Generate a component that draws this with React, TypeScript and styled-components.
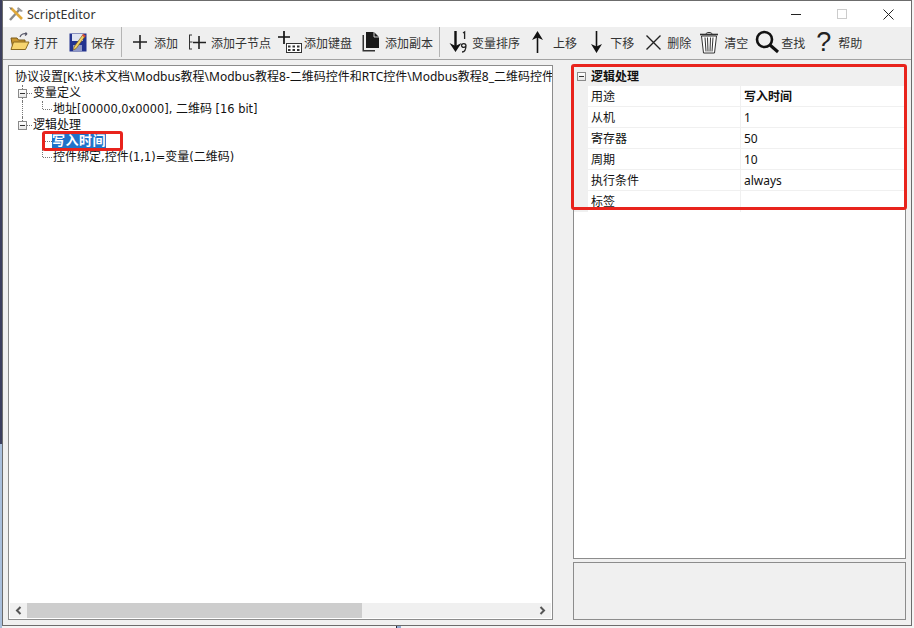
import React from "react";
import styled, { createGlobalStyle } from "styled-components";

const Global = createGlobalStyle`
  html, body { margin: 0; padding: 0; overflow: hidden; }
  body {
    width: 914px; height: 628px;
    background: linear-gradient(to bottom, #3c3f5e 0, #3c3f5e 444px, #a9bfdc 444px, #a9bfdc 628px);
    font-family: "Noto Sans", "Noto Sans CJK SC", sans-serif;
    font-size: 12px;
  }
  #root { height: 100%; }
`;

const Desktop = styled.div`
  position: relative;
  width: 914px;
  height: 628px;
  padding-left: 2px;
  box-sizing: border-box;
  background: linear-gradient(to right, transparent 0, transparent 2px, #f4f4f4 2px);
`;

const DesktopWindowEdge = styled.div`
  position: absolute;
  left: 396px;
  top: 626px;
  width: 4px;
  height: 2px;
  background: #8fa9cf;
  border-left: 1px solid #223;
`;

const Window = styled.div`
  width: 910px;
  height: 626px;
  box-sizing: border-box;
  border: 1px solid #6c6c6c;
  background: #f0f0f0;
  display: flex;
  flex-direction: column;
`;

const TitleBar = styled.div`
  height: 26px;
  flex: none;
  background: #fff;
  display: flex;
  align-items: center;
  padding-left: 5px;
`;

const TitleIcon = styled.svg`
  width: 16px;
  height: 16px;
  flex: none;
`;

const TitleText = styled.span`
  margin-left: 3px;
  font-size: 12.5px;
  color: #333;
  flex: 1;
`;

const WinButton = styled.div`
  width: 46px;
  height: 26px;
  display: flex;
  align-items: center;
  justify-content: center;
`;

const Toolbar = styled.div`
  height: 30px;
  padding-bottom: 2px;
  flex: none;
  box-sizing: content-box;
  border-bottom: 1px solid #a3a3a3;
  display: flex;
  align-items: center;
  padding-left: 7px;
  background: #efefef;
`;

const Tool = styled.div<{ $ml: number; $gap: number }>`
  display: flex;
  align-items: center;
  margin-left: ${(p) => p.$ml}px;
  gap: ${(p) => p.$gap}px;
  color: #333;
  font-size: 12px;
  white-space: nowrap;
  font-family: "Noto Sans CJK SC", sans-serif;
`;

const ToolSeparator = styled.div`
  width: 1px;
  height: 30px;
  margin-left: 6px;
  background: #b4b4b4;
`;

const Body = styled.div`
  flex: 1;
  min-height: 0;
  display: grid;
  grid-template-columns: 545px 333px;
  column-gap: 20px;
  padding: 5px;
`;

const TreePanel = styled.div`
  position: relative;
  border: 1px solid #8c8c8c;
  background: #fff;
  display: flex;
  flex-direction: column;
  overflow: hidden;
  min-height: 0;
`;

const TreeList = styled.div`
  flex: 1;
  padding: 3px 0 0 4px;
  overflow: hidden;
`;

const TreeRow = styled.div`
  height: 16px;
  display: flex;
  align-items: center;
  white-space: pre;
  color: #111;
  font-size: 12px;
  line-height: 16px;
  font-family: "Noto Sans", "Noto Sans CJK SC", sans-serif;
`;

const RootLabel = styled.span`
  margin-left: 2px;
`;

const LatinRun = styled.span`
  font-family: "DejaVu Sans", sans-serif;
  font-size: 11.4px;
`;

const Guide = styled.span<{ $line?: "none" | "full" | "half"; $arm?: boolean }>`
  position: relative;
  width: 20px;
  height: 16px;
  flex: none;
  &::before {
    content: "";
    position: absolute;
    left: 9px;
    top: 0;
    height: ${(p) => (p.$line === "none" ? 0 : p.$line === "half" ? 8 : 16)}px;
    border-left: 1px dotted #777;
  }
  &::after {
    content: "";
    position: absolute;
    left: 10px;
    top: 8px;
    width: ${(p) => (p.$arm ? 9 : 0)}px;
    border-top: 1px dotted #777;
  }
`;

const Expander = styled.span`
  position: absolute;
  z-index: 1;
  left: 5px;
  top: 4px;
  width: 7px;
  height: 7px;
  border: 1px solid #8a8a8a;
  background: linear-gradient(#fff, #e6e6e6);
  display: flex;
  align-items: center;
  justify-content: center;
  &::before {
    content: "";
    width: 5px;
    height: 1px;
    background: #333;
  }
`;

const SelectedLabel = styled.span`
  display: block;
  height: 14px;
  background: #1f73c9;
  color: #fff;
  font-weight: 700;
  font-size: 13px;
  letter-spacing: 0.5px;
  line-height: 13px;
  margin-left: -1px;
`;

const RedMark = styled.div`
  position: absolute;
  left: 33px;
  top: 65px;
  width: 81px;
  height: 20px;
  box-sizing: border-box;
  border: 3px solid #e8231c;
  border-radius: 3px;
  pointer-events: none;
`;

const HScroll = styled.div`
  height: 15px;
  flex: none;
  margin: 0 1px 1px 1px;
  background: #f0f0f0;
  display: flex;
  align-items: center;
`;

const ScrollArrow = styled.div`
  width: 17px;
  height: 15px;
  flex: none;
  display: flex;
  align-items: center;
  justify-content: center;
`;

const ScrollTrack = styled.div`
  flex: 1;
  height: 15px;
`;

const ScrollThumb = styled.div`
  height: 15px;
  background: #cdcdcd;
`;

const SideColumn = styled.div`
  display: flex;
  flex-direction: column;
  gap: 3px;
  min-height: 0;
`;

const SideTop = styled.div`
  position: relative;
  flex: 1;
  display: flex;
  min-height: 0;
`;

const PropGrid = styled.div`
  flex: 1;
  border: 1px solid #8c8c8c;
  background: #fff;
  overflow: hidden;
  font-family: "Noto Sans", "Noto Sans CJK SC", sans-serif;
`;

const CategoryRow = styled.div`
  height: 20px;
  background: #f0f0f0;
  display: flex;
  align-items: center;
  position: relative;
  padding-left: 17px;
  font-weight: 700;
  font-size: 12px;
  color: #111;
`;

const CategoryExpander = styled(Expander)`
  left: 3px;
  top: 6px;
`;

const PropRow = styled.div<{ $clip?: boolean }>`
  display: grid;
  grid-template-columns: 14px 153px 1fr;
  height: 21px;
  box-sizing: border-box;
  border-bottom: ${(p) => (p.$clip ? "none" : "1px solid #f0f0f0")};
  font-size: 12px;
  color: #111;
  overflow: hidden;
`;

const PropMargin = styled.div`
  background: #f0f0f0;
`;

const PropName = styled.div`
  padding-left: 3px;
  line-height: 22px;
  border-right: 1px solid #f0f0f0;
  white-space: nowrap;
`;

const PropValue = styled.div<{ $bold?: boolean }>`
  padding-left: 3px;
  line-height: 22px;
  font-weight: ${(p) => (p.$bold ? 700 : 400)};
`;

const PropFill = styled.div`
  height: 100%;
`;

const RedFrame = styled.div`
  position: absolute;
  left: -2px;
  top: -1px;
  width: 336px;
  height: 146px;
  box-sizing: border-box;
  border: 3px solid #e8231c;
  border-radius: 3px;
  pointer-events: none;
`;

const Description = styled.div`
  height: 56px;
  flex: none;
  border: 1px solid #8c8c8c;
  background: #f0f0f0;
`;

const ToolSvg = styled.svg`
  display: block;
  flex: none;
`;

const OpenIcon = () => (
  <ToolSvg width="20" height="20" viewBox="0 0 20 20">
    <path d="M1 6h6l1.5 2H15v9H3z" fill="#c9962f" stroke="#7a5a1a" strokeWidth="1" />
    <path d="M3.5 10H19l-3.5 7.5H1z" fill="#f7d56f" stroke="#8a6a20" strokeWidth="1" />
    <path d="M10 5c1-3 4-4 7-3l-1.5-1.5M17 2l-2 1.5" fill="none" stroke="#556" strokeWidth="1.2" />
  </ToolSvg>
);

const SaveIcon = () => (
  <ToolSvg width="18" height="20" viewBox="0 0 18 20">
    <rect x="0.5" y="1.5" width="17" height="18" fill="#23338f" />
    <rect x="3" y="2" width="11" height="7" fill="#dfe4f2" />
    <rect x="4" y="13" width="9" height="6" fill="#8f98c8" />
    <path d="M5 15L14 2.5l2.2 1.6L7.2 16.5 4.5 18z" fill="#f3d264" stroke="#7c5d1a" strokeWidth="0.7" />
    <path d="M13 3.5L14.2 1.8l2.6 1.9-1.2 1.7z" fill="#d24a3a" />
  </ToolSvg>
);

const PlusIcon = () => (
  <ToolSvg width="14" height="14" viewBox="0 0 14 14">
    <path d="M7 0v14M0 7h14" stroke="#222" strokeWidth="1.6" />
  </ToolSvg>
);

const ChildIcon = () => (
  <ToolSvg width="18" height="18" viewBox="0 0 18 18">
    <path d="M1 2h3M1.5 2v14M1 16h3M1.5 9h3" stroke="#333" strokeWidth="1" fill="none" />
    <path d="M11 3v13M5 9.5h13" stroke="#222" strokeWidth="1.6" />
  </ToolSvg>
);

const KeyboardIcon = () => (
  <ToolSvg width="24" height="24" viewBox="0 0 24 24">
    <path d="M6 1v13M0 7h12" stroke="#111" strokeWidth="1.7" />
    <rect x="8.5" y="13.5" width="15" height="9" fill="#fff" stroke="#333" />
    <path
      d="M10 15.5h2.5v2H10zM14.5 15.5H17v2h-2.5zM19 15.5h2.5v2H19zM10 19h2.5v2H10zM14.5 19H17v2h-2.5zM19 19h2.5v2H19z"
      fill="#333"
    />
  </ToolSvg>
);

const CopyIcon = () => (
  <ToolSvg width="19" height="20" viewBox="0 0 19 20">
    <path d="M5 0h8l5 5v11H5z" fill="#1a1a1a" />
    <path d="M13 0v5h5" fill="none" stroke="#fff" strokeWidth="0.8" />
    <path d="M3 3v15h11v1.5H1.5V3z" fill="#333" />
  </ToolSvg>
);

const SortIcon = () => (
  <ToolSvg width="18" height="24" viewBox="0 0 18 24">
    <path d="M6.5 1v18" stroke="#111" strokeWidth="2.4" />
    <path d="M0.5 13l6 9 6-9-6 3z" fill="#111" />
    <path d="M14 3l1.6-1v7" fill="none" stroke="#222" strokeWidth="1.3" />
    <path d="M17 16c0-3-4.5-3-4.5-.5s4.5 2.5 4.5-.5c0 4-1 7-4 7" fill="none" stroke="#222" strokeWidth="1.3" />
  </ToolSvg>
);

const UpIcon = () => (
  <ToolSvg width="13" height="22" viewBox="0 0 13 22">
    <path d="M6.5 5v17" stroke="#111" strokeWidth="1.6" />
    <path d="M6.5 0l5.5 9-5.5-2.5L1 9z" fill="#111" />
  </ToolSvg>
);

const DownIcon = () => (
  <ToolSvg width="13" height="22" viewBox="0 0 13 22">
    <path d="M6.5 0v17" stroke="#111" strokeWidth="1.6" />
    <path d="M6.5 22L1 13l5.5 2.5L12 13z" fill="#111" />
  </ToolSvg>
);

const CrossIcon = () => (
  <ToolSvg width="17" height="17" viewBox="0 0 17 17">
    <path d="M1.5 1.5l14 14M15.5 1.5l-14 14" stroke="#222" strokeWidth="1.4" />
  </ToolSvg>
);

const TrashIcon = () => (
  <ToolSvg width="20" height="23" viewBox="0 0 20 23">
    <path d="M1 3.5h18" stroke="#333" strokeWidth="1.6" />
    <path d="M7 3c0-2 6-2 6 0" fill="none" stroke="#333" />
    <path d="M2.5 5l2 17h11l2-17z" fill="#fff" stroke="#333" strokeWidth="1" />
    <path d="M6 6.5l1 14M8.5 6.5l.5 14M11.5 6.5l-.5 14M14 6.5l-1 14" stroke="#333" strokeWidth="1" />
  </ToolSvg>
);

const SearchIcon = () => (
  <ToolSvg width="24" height="24" viewBox="0 0 24 24">
    <circle cx="9.5" cy="9.5" r="7.5" fill="none" stroke="#111" strokeWidth="2.6" />
    <path d="M15 15l8 7" stroke="#111" strokeWidth="3" />
  </ToolSvg>
);

const HelpGlyph = styled.span`
  width: 17px;
  text-align: center;
  font-size: 27px;
  line-height: 24px;
  color: #222;
  font-family: "Liberation Sans", sans-serif;
  font-weight: 400;
`;

const tools: { label: string; ml: number; gap: number; icon: React.ReactNode; sepBefore?: boolean }[] = [
  { label: "打开", ml: 0, gap: 4, icon: <OpenIcon /> },
  { label: "保存", ml: 11, gap: 4, icon: <SaveIcon /> },
  { label: "添加", ml: 11, gap: 7, icon: <PlusIcon />, sepBefore: true },
  { label: "添加子节点", ml: 10, gap: 5, icon: <ChildIcon /> },
  { label: "添加键盘", ml: 7, gap: 2, icon: <KeyboardIcon /> },
  { label: "添加副本", ml: 9, gap: 5, icon: <CopyIcon /> },
  { label: "变量排序", ml: 9, gap: 5, icon: <SortIcon />, sepBefore: true },
  { label: "上移", ml: 11, gap: 9, icon: <UpIcon /> },
  { label: "下移", ml: 13, gap: 7, icon: <DownIcon /> },
  { label: "删除", ml: 11, gap: 5, icon: <CrossIcon /> },
  { label: "清空", ml: 8, gap: 5, icon: <TrashIcon /> },
  { label: "查找", ml: 7, gap: 2, icon: <SearchIcon /> },
  { label: "帮助", ml: 10, gap: 6, icon: <HelpGlyph>?</HelpGlyph> },
];

const props: { name: string; value: string; bold?: boolean }[] = [
  { name: "用途", value: "写入时间", bold: true },
  { name: "从机", value: "1" },
  { name: "寄存器", value: "50" },
  { name: "周期", value: "10" },
  { name: "执行条件", value: "always" },
];

export default function App() {
  return (
    <Desktop>
      <Global />
      <Window>
        <TitleBar>
          <TitleIcon viewBox="0 0 16 16">
            <path d="M2 14L12 3" stroke="#8a8a8a" strokeWidth="2.4" />
            <path d="M10 1l5 4-2 1-4-3z" fill="#9a9a9a" />
            <path d="M3 2l11 11" stroke="#e0a93a" strokeWidth="2.6" />
            <path d="M1 1l3 1-1 2z" fill="#777" />
          </TitleIcon>
          <TitleText>ScriptEditor</TitleText>
          <WinButton>
            <svg width="10" height="10" viewBox="0 0 10 10">
              <path d="M0 5.5h10" stroke="#222" />
            </svg>
          </WinButton>
          <WinButton>
            <svg width="10" height="10" viewBox="0 0 10 10">
              <rect x="0.5" y="0.5" width="9" height="9" fill="none" stroke="#ccc" />
            </svg>
          </WinButton>
          <WinButton>
            <svg width="11" height="11" viewBox="0 0 11 11">
              <path d="M0.5 0.5l10 10M10.5 0.5l-10 10" stroke="#222" />
            </svg>
          </WinButton>
        </TitleBar>
        <Toolbar>
          {tools.map((t) => (
            <React.Fragment key={t.label}>
              {t.sepBefore && <ToolSeparator />}
              <Tool $ml={t.ml} $gap={t.gap}>
                {t.icon}
                {t.label}
              </Tool>
            </React.Fragment>
          ))}
        </Toolbar>
        <Body>
          <TreePanel>
            <TreeList>
              <TreeRow>
                <RootLabel>协议设置[K:\技术文档\Modbus教程\Modbus教程8-二维码控件和RTC控件\Modbus教程8_二维码控件和RTC控件.mbs]</RootLabel>
              </TreeRow>
              <TreeRow>
                <Guide $line="full" $arm>
                  <Expander />
                </Guide>
                变量定义
              </TreeRow>
              <TreeRow>
                <Guide $line="full" />
                <Guide $line="half" $arm />
                地址<LatinRun>[00000,0x0000], </LatinRun>二维码<LatinRun> [16 bit]</LatinRun>
              </TreeRow>
              <TreeRow>
                <Guide $line="half" $arm>
                  <Expander />
                </Guide>
                逻辑处理
              </TreeRow>
              <TreeRow>
                <Guide $line="none" />
                <Guide $line="full" $arm />
                <SelectedLabel>写入时间</SelectedLabel>
              </TreeRow>
              <TreeRow>
                <Guide $line="none" />
                <Guide $line="half" $arm />
                控件绑定<LatinRun>,</LatinRun>控件<LatinRun>(1,1)=</LatinRun>变量<LatinRun>(</LatinRun>二维码<LatinRun>)</LatinRun>
              </TreeRow>
            </TreeList>
            <RedMark />
            <HScroll>
              <ScrollArrow>
                <svg width="7" height="9" viewBox="0 0 7 9">
                  <path d="M5.5 1L2 4.5 5.5 8" fill="none" stroke="#555" strokeWidth="2" />
                </svg>
              </ScrollArrow>
              <ScrollTrack>
                <ScrollThumb style={{ width: `${(336 / 509) * 100}%` }} />
              </ScrollTrack>
              <ScrollArrow>
                <svg width="7" height="9" viewBox="0 0 7 9">
                  <path d="M1.5 1L5 4.5 1.5 8" fill="none" stroke="#555" strokeWidth="2" />
                </svg>
              </ScrollArrow>
            </HScroll>
          </TreePanel>
          <SideColumn>
            <SideTop>
              <PropGrid>
                <CategoryRow>
                  <CategoryExpander />
                  逻辑处理
                </CategoryRow>
                {props.map((p) => (
                  <PropRow key={p.name}>
                    <PropMargin />
                    <PropName>{p.name}</PropName>
                    <PropValue $bold={p.bold}>{p.value}</PropValue>
                  </PropRow>
                ))}
                <PropRow $clip>
                  <PropMargin />
                  <PropName>标签</PropName>
                  <PropFill />
                </PropRow>
              </PropGrid>
              <RedFrame />
            </SideTop>
            <Description />
          </SideColumn>
        </Body>
      </Window>
      <DesktopWindowEdge />
    </Desktop>
  );
}
